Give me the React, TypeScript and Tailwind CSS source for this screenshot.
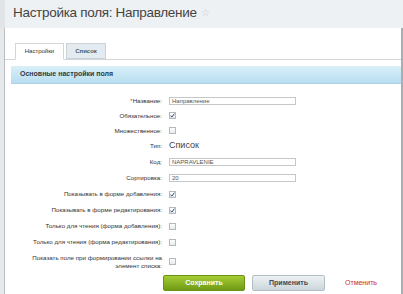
import React from 'react';

const font = { fontFamily: '"Liberation Sans", Arial, sans-serif' };

const Box = ({ checked }: { checked?: boolean }) => (
  <span className="w-[7px] h-[7px] border border-[#b3babf] bg-gradient-to-b from-white to-[#e6eaec] flex items-center justify-center">
    {checked && (
      <svg width="5" height="5" viewBox="0 0 5 5">
        <path d="M0.6 2.6 L1.9 4.1 L4.4 0.6" fill="none" stroke="#3b4f7a" strokeWidth="1" />
      </svg>
    )}
  </span>
);

const Field = ({ value }: { value: string }) => (
  <div className="w-[127px] h-[8px] border border-[#c4c8cb] bg-white flex items-center px-[2px] text-[6px] leading-none text-[#555]">
    {value}
  </div>
);

type Row = { label: React.ReactNode; h: string; value: React.ReactNode };

const rows: Row[] = [
  { label: <><span className="text-[#d33]">*</span>Название:</>, h: 'h-[14px]', value: <Field value="Направление" /> },
  { label: 'Обязательное:', h: 'h-[15px]', value: <Box checked /> },
  { label: 'Множественное:', h: 'h-[15px]', value: <Box /> },
  { label: 'Тип:', h: 'h-[15px]', value: <span className="text-[9px] text-[#444]">Список</span> },
  { label: 'Код:', h: 'h-[17px]', value: <Field value="NAPRAVLENIE" /> },
  { label: 'Сортировка:', h: 'h-[16px]', value: <Field value="20" /> },
  { label: 'Показывать в форме добавления:', h: 'h-[16px]', value: <Box checked /> },
  { label: 'Показывать в форме редактирования:', h: 'h-[16px]', value: <Box checked /> },
  { label: 'Только для чтения (форма добавления):', h: 'h-[16px]', value: <Box /> },
  { label: 'Только для чтения (форма редактирования):', h: 'h-[16px]', value: <Box /> },
  { label: 'Показать поле при формировании ссылки на элемент списка:', h: 'h-[23px]', value: <Box /> },
];

export default function App() {
  return (
    <div className="w-[403px] h-[294px] overflow-hidden bg-white flex flex-col" style={font}>
      <div className="h-[28px] bg-[#eef1f4] flex items-center pl-[8px] pb-[2px] border-l-[5px] border-[#e1e5e8]">
        <span className="text-[13.5px] tracking-[-0.3px] text-[#444] leading-none">Настройка поля: Направление</span>
        <span className="ml-[4px] text-[10px] text-[#c8cdd1] leading-none">☆</span>
      </div>
      <div className="flex-1 flex">
        <div className="w-[5px] bg-[#e6e9ec] border-r border-[#b9bec2]" />
        <div className="flex-1 flex flex-col border-r-2 border-[#a9aeb2]">
          <div className="h-[32px] flex items-end pl-[10px] border-b border-[#d3d6d8]">
            <div className="h-[17px] w-[49px] -mb-px bg-white border border-[#d3d6d8] border-b-white flex items-center justify-center text-[6px] text-[#333]">
              Настройки
            </div>
            <div className="h-[16px] w-[40px] ml-[2px] bg-[#e3ebf0] border border-[#cbd3d8] flex items-center justify-center text-[6px] font-bold text-[#4a5a66]">
              Список
            </div>
          </div>
          <div className="mt-[6px] ml-[6px] h-[18px] bg-gradient-to-b from-[#daeff8] to-[#b7def0] border-b border-[#a9d2e4] flex items-center pl-[9px] text-[7px] font-bold text-[#2f3b44]">
            Основные настройки поля
          </div>
          <div className="mt-[10px] flex flex-col">
            {rows.map((r, i) => (
              <div key={i} className={`flex items-center ${r.h}`}>
                <div className="w-[161px] flex justify-end pr-[4px]">
                  <div className="w-[137px] text-right text-[6.2px] leading-[8px] text-[#333]">{r.label}</div>
                </div>
                <div className="flex items-center pl-[3px]">{r.value}</div>
              </div>
            ))}
            <div className="mt-[2px] flex items-center pl-[158px]">
              <div className="w-[82px] h-[16px] rounded-[2px] bg-gradient-to-b from-[#a6cd35] to-[#6f9b14] border border-[#6a9111] flex items-center justify-center text-[7px] font-bold text-white">
                Сохранить
              </div>
              <div className="ml-[7px] w-[73px] h-[16px] rounded-[2px] bg-gradient-to-b from-[#eef2f4] to-[#cbd6db] border border-[#b4bec3] flex items-center justify-center text-[7px] font-bold text-[#3f4a50]">
                Применить
              </div>
              <span className="ml-[20px] text-[7px] text-[#c9302c]">Отменить</span>
            </div>
          </div>
        </div>
      </div>
    </div>
  );
}
